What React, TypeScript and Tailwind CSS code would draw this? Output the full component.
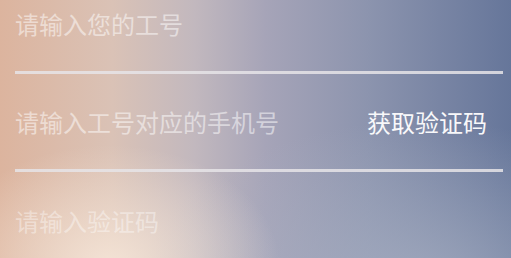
export default function App() {
  return (
    <div
      className="relative h-[258px] w-[511px] overflow-hidden bg-[radial-gradient(ellipse_170px_120px_at_110px_265px,rgba(246,230,216,0.9),rgba(246,230,216,0)),radial-gradient(ellipse_280px_170px_at_420px_290px,rgba(170,178,196,0.75),rgba(170,178,196,0)),linear-gradient(to_right,#dcb49e_0%,#dac2b6_22%,#c2b8be_38%,#a6a4b8_52%,#8c94ae_72%,#66769a_100%)]"
      style={{ fontFamily: '"Noto Sans CJK SC", "Noto Sans", sans-serif' }}
    >
      <div className="-mt-[24px] flex flex-col pl-[15px] pr-[8px]">
        <div className="flex h-[98px] items-center border-b-[3px] border-[#e6e4e8]/85">
          <input
            className="w-full bg-transparent text-[24px] text-white outline-none placeholder:text-white/50"
            placeholder="请输入您的工号"
          />
        </div>
        <div className="flex h-[98px] items-center border-b-[3px] border-[#e6e4e8]/85">
          <input
            className="min-w-0 flex-1 bg-transparent text-[24px] text-white outline-none placeholder:text-white/50"
            placeholder="请输入工号对应的手机号"
          />
          <button className="shrink-0 pr-[16px] text-[24px] text-[#f8f8fa]">获取验证码</button>
        </div>
        <div className="flex h-[98px] items-center">
          <input
            className="w-full bg-transparent text-[24px] text-white outline-none placeholder:text-white/40"
            placeholder="请输入验证码"
          />
        </div>
      </div>
    </div>
  )
}
